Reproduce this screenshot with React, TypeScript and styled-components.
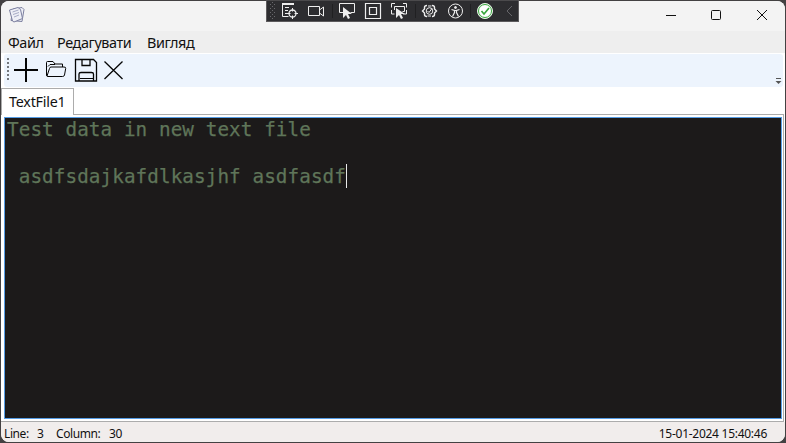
import React from "react";
import styled, { createGlobalStyle } from "styled-components";

const GlobalStyle = createGlobalStyle`
  * { box-sizing: border-box; }
  body { margin: 0; background: #3a3839; }
`;

const Desktop = styled.div`
  width: 786px;
  height: 443px;
  padding: 1px;
  background: #434142;
  overflow: hidden;
  font-family: "Noto Sans", sans-serif;
  color: #111;
`;

const Window = styled.div`
  height: 441px;
  display: flex;
  flex-direction: column;
  background: #fff;
  border-radius: 8px;
  overflow: hidden;
`;

const TitleBar = styled.header`
  height: 30px;
  flex: none;
  display: flex;
  justify-content: space-between;
  background: #f3f3f3;
`;

const AppIcon = styled.svg`
  margin: 5px 0 0 7px;
`;

const Captions = styled.svg`
  margin: 1px 8px 0 0;
`;

const DebugBar = styled.div`
  position: absolute;
  left: 266px;
  top: 0;
  width: 253px;
  height: 22px;
  background: #2d2d30;
  border: 1px solid #5c5a5c;
  border-top-color: #4b4a4c;
`;

const DebugIcons = styled.svg`
  display: block;
  margin: -1px;
`;

const MenuBar = styled.nav`
  height: 22px;
  flex: none;
  display: flex;
  background: #eee;
  padding-left: 7px;
`;

const MenuItem = styled.span<{ $width: number }>`
  width: ${(p) => p.$width}px;
  font-size: 14.4px;
  line-height: 23px;
  letter-spacing: -0.4px;
  white-space: nowrap;
`;

const ToolBar = styled.div`
  height: 33px;
  flex: none;
  margin: 1px 2px 0 3px;
  border-radius: 3px;
  background: #edf4fd;
  display: flex;
  justify-content: space-between;
`;

const Tools = styled.svg`
  flex: none;
`;

const TabStrip = styled.div`
  height: 27px;
  flex: none;
  display: flex;
  margin: 1px 1px 0 0;
`;

const Tab = styled.div`
  width: 73px;
  border: 1px solid #acacac;
  border-bottom: 0;
  padding-left: 7px;
  font-size: 14.3px;
  line-height: 26px;
  letter-spacing: -0.22px;
  white-space: nowrap;
`;

const TabRule = styled.div`
  flex: 1;
  border-bottom: 1px solid #acacac;
`;

const TabPage = styled.main`
  flex: 1;
  margin-right: 1px;
  padding: 2px 1px 2px 3px;
  border-right: 1px solid #acacac;
  border-bottom: 1px solid #acacac;
`;

const Editor = styled.div`
  height: 100%;
  border: 1px solid #569de5;
  background: #1c1a1a;
  color: #5f7559;
  padding-left: 2px;
  font-family: "DejaVu Sans Mono", monospace;
  font-size: 19.3px;
  letter-spacing: 0.08px;
  line-height: 23.4px;
  white-space: pre;
  -webkit-text-stroke: 0.25px #5f7559;
`;

const Line = styled.div`
  height: 23.4px;
  display: flex;
`;

const Caret = styled.span`
  width: 1px;
  height: 24px;
  margin-top: -1px;
  background: #e9e9e9;
`;

const StatusBar = styled.footer`
  height: 20px;
  flex: none;
  display: flex;
  background: #f1edec;
  padding: 0 18px 0 3px;
  font-size: 12px;
  line-height: 23px;
  white-space: nowrap;
`;

const StatusItem = styled.span<{ $width: number }>`
  width: ${(p) => p.$width}px;
  letter-spacing: -0.4px;
`;

const Clock = styled.time`
  margin-left: auto;
  letter-spacing: -0.27px;
`;

const DebugToolbar = () => (
  <DebugBar>
    <DebugIcons width="253" height="22" viewBox="266 0 253 22" fill="none" stroke="#eeeeee">
      <g stroke="#68686c" strokeDasharray="1 3">
        <path d="M270.5 4v15M274.5 4v15" />
        <path d="M272.5 2v17" />
      </g>
      <path d="M282.5 3v13.500h6M282 4h12M285 7.500h4M285 10.500h3M285 13.500h3" />
      <path d="M282 4h12" strokeWidth="2" />
      <circle cx="292.500" cy="13.500" r="3.500" strokeWidth="1.300" />
      <path d="M292.500 8v3.500M292.500 15.500V19M287 13.500h3.500M294.500 13.500H298" />
      <path d="M308.500 6.500h11v9h-11zM319.500 10l4-3v9l-4-3" />
      <path d="M332.500 4v14M415.500 4v14M470.500 4v14" stroke="#202022" />
      <path d="M343 12.500h-3.500v-9h15v9h-4" />
      <path d="M343 7v11l3-3 2 4 2-1-2-4h4z" fill="#eee" stroke="none" />
      <path d="M365.500 3.500h15v15h-15zM369.500 7.500h7v7h-7z" strokeWidth="1.200" />
      <path d="M395 3.500h-3.500v4M403 3.500h3.500v4M406.500 10v4H403M391.500 10v4h3M394.500 10V6.500h10v5h-2" />
      <path d="M396 8v10l3-3 2 4 2-1-2-4h4z" fill="#eee" stroke="none" />
      <path d="M427 5.500q-2.500 0-2.500 2v1.500l-2 2 2 2v1.500q0 2 2.500 2M432 5.500q2.500 0 2.500 2v1.500l2 2-2 2v1.500q0 2-2.500 2" strokeWidth="1.400" />
      <circle cx="429.500" cy="11" r="3.300" />
      <path d="M427.500 11l1.500 1.500 3-4M428 6h3.500M427.500 16h3.500" />
      <circle cx="455.500" cy="11" r="7" />
      <circle cx="455.500" cy="7.500" r="1" fill="#eee" />
      <path d="M451.500 9.500l3 1v2l-2 4M459.500 9.500l-3 1v2l2 4M454 10.500h3" strokeWidth="1.200" />
      <circle cx="485" cy="11" r="7.500" fill="#fff" stroke="#e5f5e5" />
      <circle cx="485" cy="11" r="6.500" fill="#fff" stroke="#38a63d" />
      <path d="M481.500 11l2.500 3 5-6" stroke="#38a63d" strokeWidth="1.700" />
      <path d="M512 6l-5 5 5 5" stroke="#656569" />
    </DebugIcons>
  </DebugBar>
);

export default function App() {
  return (
    <>
      <GlobalStyle />
      <Desktop>
        <Window>
          <TitleBar>
            <AppIcon width="18" height="18" viewBox="8 6 18 18" fill="#eeeff6" stroke="#7c80a0">
              <path d="M13 9l9-1.500 2 2-2 12-11-1z" />
              <path d="M9.500 10l8.500-2.500 2.500 2 2 9-8.500 3.500-1.500-1z" />
              <path d="M12.500 12l6-2M13 14.500l6-2M14 17l5-2" stroke="#a7abc5" />
            </AppIcon>
            <Captions width="112" height="29" viewBox="665 2 112 29" fill="none" stroke="#111">
              <path d="M666 15.500h10" />
              <rect x="711.500" y="10.500" width="9" height="9" rx="1" />
              <path d="M757 10l10 10M767 10l-10 10" />
            </Captions>
          </TitleBar>
          <MenuBar>
            <MenuItem $width={49}>Файл</MenuItem>
            <MenuItem $width={90}>Редагувати</MenuItem>
            <MenuItem $width={60}>Вигляд</MenuItem>
          </MenuBar>
          <ToolBar>
            <Tools width="125" height="33" viewBox="4 54 125 33" fill="none" stroke="#050505">
              <path d="M8 58v23" stroke="#73777c" strokeWidth="2" strokeDasharray="2 2" />
              <path d="M14 70h24M26 58v24" strokeWidth="2" />
              <path d="M46.500 75V62.500q0-1 1-1h5.500l2 2.500h7.500v3M47 76l2.500-7.500q.3-1.500 1.500-1.500h13q2 0 1.700 1.500l-1.200 6.500q-.3 1.500-2 1.500H48q-1.500 0-1.500-1.500M48 66.500l2-2h5" />
              <path d="M75.500 59.500h18l3 3v18.500h-21zM82 59.500v6h8v-6M79 81v-7q0-1.500 2-1.500h10.500q2 0 2 1.500v7" strokeWidth="1.300" />
              <path d="M80 78.500h13" />
              <path d="M104.500 61.500l18 17.500M122.500 61.500l-18 17.500" strokeWidth="1.300" />
            </Tools>
            <Tools width="12" height="33" viewBox="771 54 12 33">
              <path d="M776 78.500h5" stroke="#555" />
              <path d="M775.500 81h6l-3 3z" fill="#555" />
            </Tools>
          </ToolBar>
          <TabStrip>
            <Tab>TextFile1</Tab>
            <TabRule />
          </TabStrip>
          <TabPage>
            <Editor>
              <Line>Test data in new text file</Line>
              <Line />
              <Line>{" asdfsdajkafdlkasjhf asdfasdf"}<Caret /></Line>
            </Editor>
          </TabPage>
          <StatusBar>
            <StatusItem $width={33}>Line:</StatusItem>
            <StatusItem $width={19}>3</StatusItem>
            <StatusItem $width={53}>Column:</StatusItem>
            <StatusItem $width={20}>30</StatusItem>
            <Clock>15-01-2024 15:40:46</Clock>
          </StatusBar>
        </Window>
        <DebugToolbar />
      </Desktop>
    </>
  );
}
